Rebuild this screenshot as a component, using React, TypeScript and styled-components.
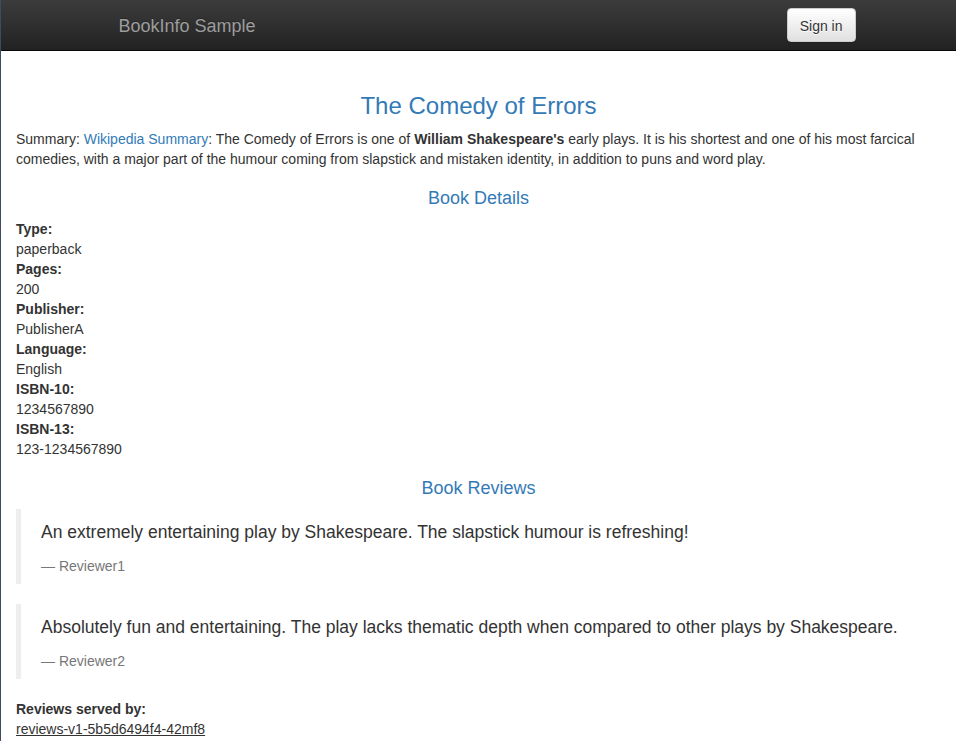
import React from 'react';
import styled, {createGlobalStyle} from 'styled-components';

const GlobalStyle = createGlobalStyle`
  html, body {
    margin: 0;
    padding: 0;
    background: #fff;
  }
  body {
    font-family: "Liberation Sans", Arial, Helvetica, sans-serif;
    font-size: 14px;
    line-height: 1.42857143;
    color: #333;
  }
  * {
    box-sizing: border-box;
  }
`

const Page = styled.div`
  min-height: 741px;
  border-left: 1px solid #3f4c60;
`

const Navbar = styled.div`
  height: 51px;
  background: linear-gradient(to bottom, #3c3c3c 0, #222 100%);
  border-bottom: 1px solid #080808;
`

const NavInner = styled.div`
  width: 750px;
  height: 50px;
  margin: 0 auto;
  display: flex;
  justify-content: space-between;
  align-items: flex-start;
`

const Brand = styled.div`
  padding: 16px 15px 14px;
  font-size: 18px;
  line-height: 20px;
  color: #9d9d9d;
  text-shadow: 0 -1px 0 rgba(0, 0, 0, 0.25);
`

const SignIn = styled.button`
  margin: 8px -2px 0 0;
  padding: 7px 12px 5px;
  font-family: inherit;
  font-size: 14px;
  line-height: 20px;
  color: #333;
  background: linear-gradient(to bottom, #fff 0, #e0e0e0 100%);
  border: 1px solid #ccc;
  border-radius: 4px;
  text-shadow: 0 1px 0 #fff;
  box-shadow: inset 0 1px 0 rgba(255, 255, 255, 0.15), 0 1px 1px rgba(0, 0, 0, 0.075);
  cursor: pointer;
`

const Content = styled.div`
  display: flex;
  flex-direction: column;
  padding: 42px 15px 0;
`

const Title = styled.h3`
  margin: 0 0 10px;
  font-size: 24px;
  font-weight: 500;
  line-height: 1.1;
  text-align: center;
  color: #337ab7;
`

const Summary = styled.p`
  margin: 0 0 10px;

  & a {
    color: #337ab7;
    text-decoration: none;
  }
`

const Heading = styled.h4<{$top: number}>`
  margin: ${p => p.$top}px 0 10px;
  font-size: 18px;
  font-weight: 500;
  line-height: 1.1;
  text-align: center;
  color: #337ab7;
`

const Details = styled.dl`
  margin: 0 0 20px;

  & dt {
    font-weight: 700;
  }

  & dd {
    margin: 0;
  }
`

const Quote = styled.blockquote`
  margin: 0 0 20px;
  padding: 11px 20px 8px;
  border-left: 5px solid #eee;
  font-size: 17.5px;

  & p {
    margin: 0 0 11px;
  }
`

const QuoteFooter = styled.footer`
  font-size: 14px;
  line-height: 1.42857143;
  color: #777;
`

const ServedBy = styled.div`
  & b {
    display: block;
    font-weight: 700;
  }

  & u {
    display: inline-block;
  }
`

const details = [
  ['Type:', 'paperback'],
  ['Pages:', '200'],
  ['Publisher:', 'PublisherA'],
  ['Language:', 'English'],
  ['ISBN-10:', '1234567890'],
  ['ISBN-13:', '123-1234567890'],
]

const reviews = [
  {text: 'An extremely entertaining play by Shakespeare. The slapstick humour is refreshing!', by: 'Reviewer1'},
  {text: 'Absolutely fun and entertaining. The play lacks thematic depth when compared to other plays by Shakespeare.', by: 'Reviewer2'},
]

export default function App() {
  return <Page>
    <GlobalStyle/>
    <Navbar>
      <NavInner>
        <Brand>BookInfo Sample</Brand>
        <SignIn>Sign in</SignIn>
      </NavInner>
    </Navbar>

    <Content>
      <Title>The Comedy of Errors</Title>
      <Summary>
        Summary: <a href="#">Wikipedia Summary</a>: The Comedy of Errors is one of <b>William Shakespeare's</b> early
        plays. It is his shortest and one of his most farcical comedies, with a major part of the humour coming from
        slapstick and mistaken identity, in addition to puns and word play.
      </Summary>

      <Heading $top={10}>Book Details</Heading>
      <Details>
        {details.map(([k, v]) => <React.Fragment key={k}>
          <dt>{k}</dt>
          <dd>{v}</dd>
        </React.Fragment>)}
      </Details>

      <Heading $top={0}>Book Reviews</Heading>
      {reviews.map(r => <Quote key={r.by}>
        <p>{r.text}</p>
        <QuoteFooter>&mdash; {r.by}</QuoteFooter>
      </Quote>)}

      <ServedBy>
        <b>Reviews served by:</b>
        <u>reviews-v1-5b5d6494f4-42mf8</u>
      </ServedBy>
    </Content>
  </Page>
}
